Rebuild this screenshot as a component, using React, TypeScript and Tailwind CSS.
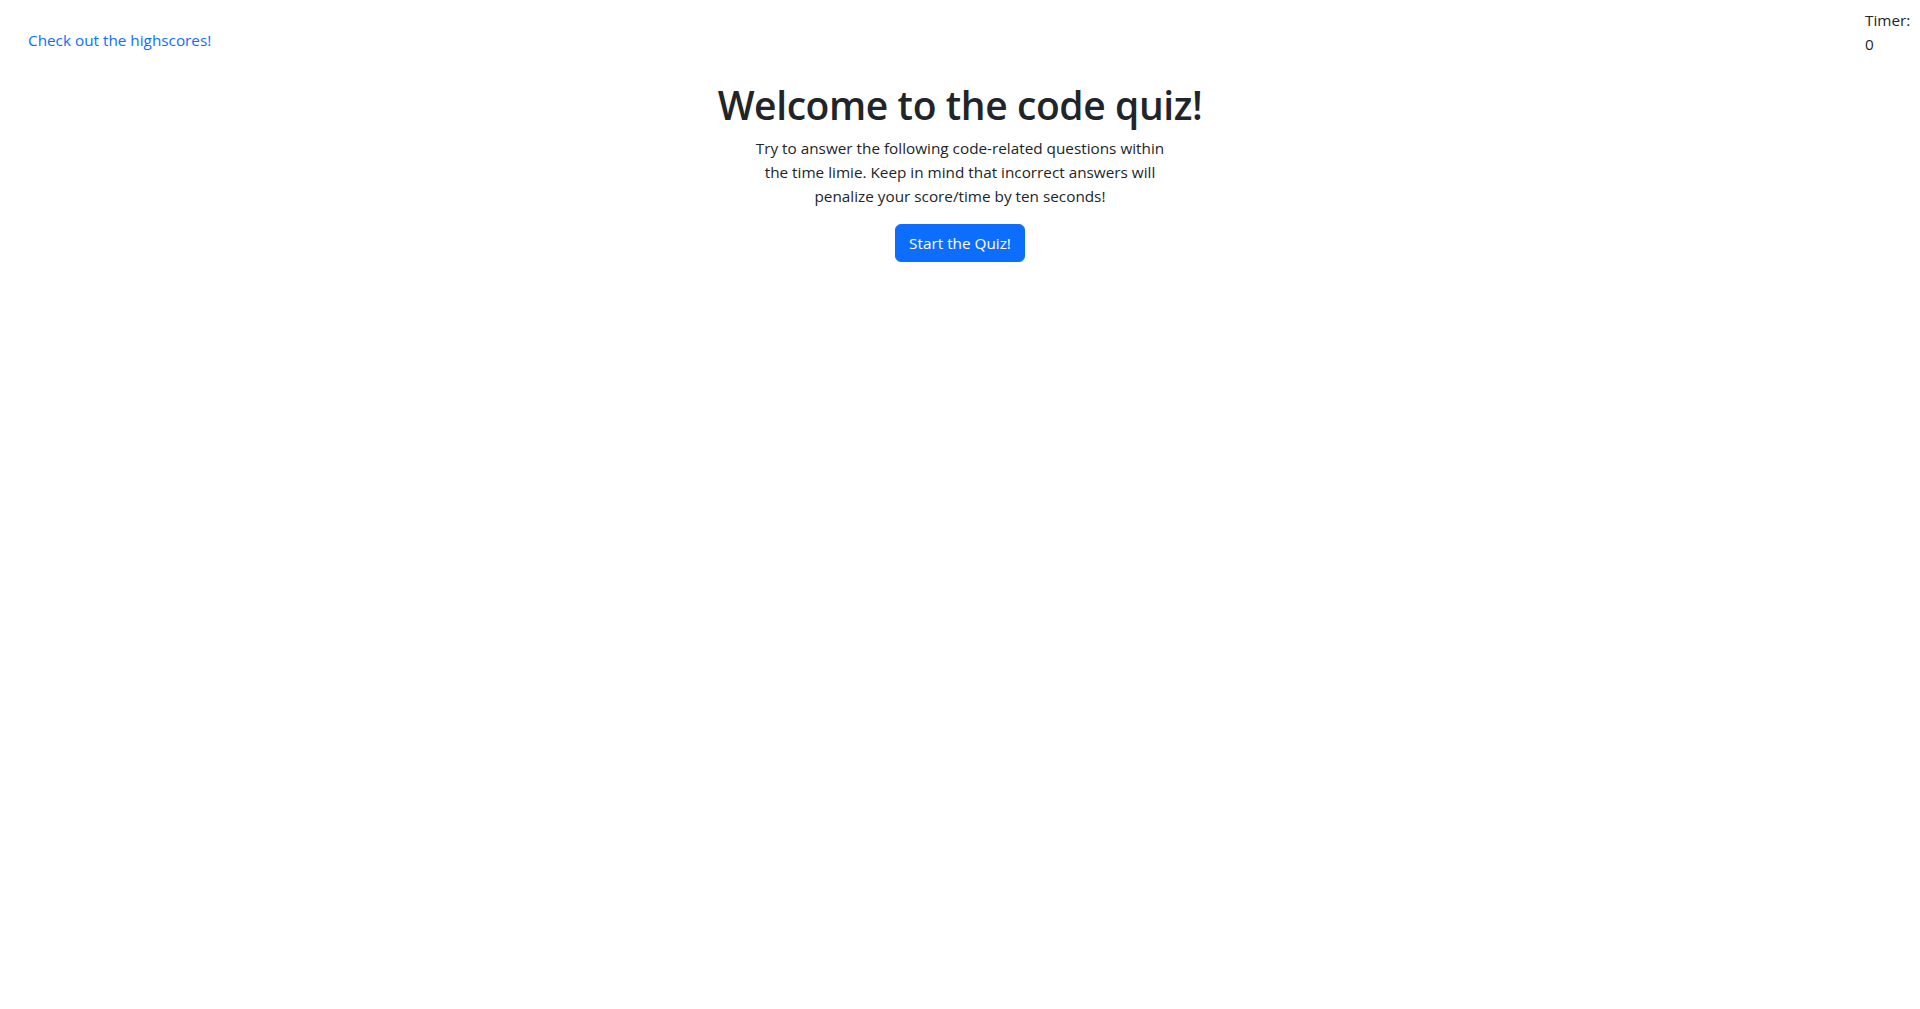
import React from "react";

export default function App() {
  return (
    <div
      className="min-h-[1009px] bg-white text-[#212529] text-[15.3px] leading-[24px]"
      style={{ fontFamily: '"Segoe UI", "Open Sans", "Noto Sans", Arial, sans-serif' }}
    >
      <header className="flex items-start justify-between pl-[12px] pt-[8px]">
        <a href="#" className="mt-[20px] px-[16px] text-[#0d6efd] no-underline">
          Check out the highscores!
        </a>
        <div className="w-[48px] mr-[7px]">Timer: 0</div>
      </header>
      <main className="flex flex-col items-center text-center mt-[25px]">
        <h1 className="text-[39px] leading-[48px] font-semibold tracking-[-0.4px] m-0">
          Welcome to the code quiz!
        </h1>
        <p className="mt-[7px] mb-[16px]">
          Try to answer the following code-related questions within
          <br />
          the time limie. Keep in mind that incorrect answers will
          <br />
          penalize your score/time by ten seconds!
        </p>
        <button
          type="button"
          className="h-[38px] px-[13px] rounded-[6px] bg-[#0d6efd] text-white border border-[#0d6efd]"
        >
          Start the Quiz!
        </button>
      </main>
    </div>
  );
}
